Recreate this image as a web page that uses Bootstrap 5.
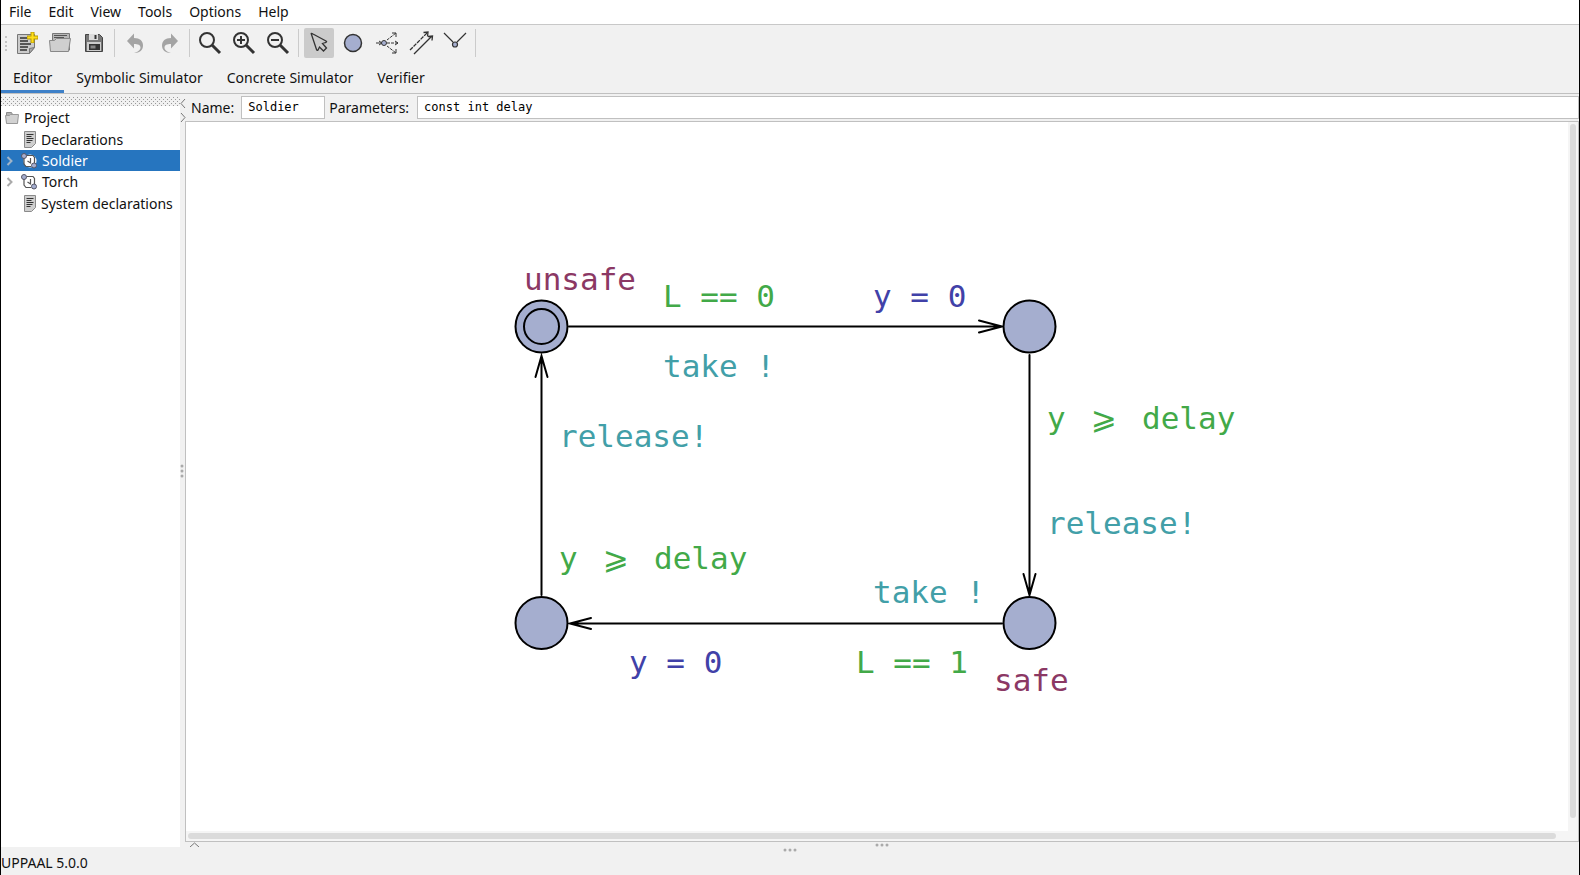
<!DOCTYPE html>
<html lang="en">
<head>
<meta charset="utf-8">
<meta name="viewport" content="width=device-width, initial-scale=1">
<title>UPPAAL</title>
<link href="https://cdn.jsdelivr.net/npm/bootstrap@5.3.0/dist/css/bootstrap.min.css" rel="stylesheet">
<style>
  body { font: 14px/20px "Noto Sans", sans-serif; color: #111; background: #f1f1f1; }
  .app-window { border: solid #000; border-width: 0 1px; }
  .menu-bar { background: #fff; border-bottom: 1px solid #c8c8c8; height: 25px; gap: 1px; }
  .menu-bar a, .mode-tabs a { color: #111; text-decoration: none; }
  .menu-bar a { padding: 2px 8px; }
  .tool-bar { height: 36px; padding: 0 4px; gap: 4px; }
  .tool-grip { width: 2px; height: 15px; border-left: 2px dotted #c4c4c4; }
  .tool-btn { width: 30px; height: 30px; padding: 0; border: 0; border-radius: 2px; background: none; display: flex; }
  .tool-btn.active { background: #cbcbcb; }
  .tool-sep { width: 1px; height: 28px; margin: 0 1px; background: #cbcbcb; }
  .mode-tabs { height: 33px; border-bottom: 1px solid #c0c0c0; }
  .mode-tabs a { padding: 7px 12px 2px; border-bottom: 3px solid transparent; }
  .mode-tabs a.active { border-color: #3d80c8; }
  .side-pane { width: 179px; padding-top: 3px; }
  .drag-strip { height: 9px; background:
    conic-gradient(from 270deg at 1px 1px, #999 25%, transparent 0) 0 0 / 4px 4px,
    conic-gradient(from 270deg at 1px 1px, #999 25%, transparent 0) 2px 2px / 4px 4px; }
  .tree-row { height: 22px; padding: 1px 0 0 4px; gap: 5px; white-space: nowrap; }
  .tree-row svg { flex: none; }
  .tree-row.short-row { height: 21px; }
  .tree-row.chosen { background: #2675bf; color: #fff; }
  .split-v { width: 5px; }
  .split-h { height: 5px; }
  .over { position: absolute; }
  .param-row { height: 27px; padding: 2px 0 3px 6px; }
  .param-row label { padding-top: 1px; }
  .param-row input { height: 23px; padding: 0 6px; border: 1px solid #c0c0c0; border-radius: 0; font: 12px/16px "DejaVu Sans Mono", monospace; color: #000; background: #fff; }
  .name-box { width: 84px; margin: 0 4px 0 7px; }
  .param-box { margin-left: 8px; }
  .draw-area { border: 1px solid #c0c0c0; background: #fff; }
  .bar-v { width: 10px; background: #f5f5f5; padding: 2px 2px 13px; }
  .bar-h { height: 10px; background: #f5f5f5; padding: 2px 22px 2px 2px; }
  .bar-v div, .bar-h div { width: 100%; height: 100%; border-radius: 3px; background: #dbdbdb; }
  .automaton text { font: 31px "DejaVu Sans Mono", monospace; white-space: pre; }
  .automaton .rel { font-family: "DejaVu Sans", sans-serif; }
  .loc { fill: #8b3864; } .guard { fill: #42a948; } .update { fill: #4141a8; } .sync { fill: #429fa8; }
  .state-line { fill: #a5aecf; stroke: #000; stroke-width: 2; }
  .edge-line { fill: none; stroke: #000; stroke-width: 2; stroke-linecap: round; }
  .status-line { height: 23px; padding-top: 1px; }
</style>
</head>
<body>
<svg width="0" height="0" class="position-absolute" aria-hidden="true">
  <defs>
    <symbol id="doc" viewBox="0 0 12 17"><path d="M.5.5h11v12l-4 4h-7z" fill="#cfcfcf" stroke="#8a8a8a"/><path d="M2.500 3.500h7M2.500 5.500h5M2.500 7.500h7M2.500 9.500h6M2.500 11.500h4" stroke="#333"/></symbol>
    <symbol id="folder" viewBox="0 0 14 14"><path d="M1.500 12V1.500h5l1 2h5V12z" fill="#b4b4b4" stroke="#8c8c8c"/><path d="M1.500 12.500l-1-8h4l1-1h8l-1 9z" fill="#d2d2d2" stroke="#999"/></symbol>
    <symbol id="template" viewBox="0 0 16 16"><circle cx="9" cy="8" r="6.500" fill="#fff"/><path d="M6 2.500h6l1.500 2V10M3 5v6l2 2.500h5M9.500 5v5L6.500 8" fill="none" stroke="#555" stroke-width="1.200"/><g fill="#a5aecf" stroke="#556"><circle cx="3" cy="3" r="2.500"/><circle cx="13" cy="12.500" r="2.500"/></g></symbol>
  </defs>
</svg>
<div class="app-window d-flex flex-column vh-100 overflow-hidden">
  <nav class="menu-bar d-flex align-items-start" aria-label="Menu">
    <a href="#">File</a><a href="#">Edit</a><a href="#">View</a><a href="#">Tools</a><a href="#">Options</a><a href="#">Help</a>
  </nav>

  <div class="tool-bar d-flex align-items-center" role="toolbar" aria-label="Tools">
    <span class="tool-grip"></span>
    <button class="tool-btn" type="button" aria-label="New"><svg width="30" height="30"><path d="M6.500 6.500h17v13l-5 6h-12z" fill="#cbcbcb" stroke="#777"/><path d="M18.500 25.500v-5l5-1z" fill="#aaa" stroke="#777"/><path d="M9 10h7M9 13h8M9 16h11M9 19h8M9 22h7" stroke="#333" stroke-width="1.500"/><path d="M21.500 4v11M16 9.500h11" stroke="#b89a00" stroke-width="4"/><path d="M21.500 4.500v10M16.500 9.500h10" stroke="#ffdf1c" stroke-width="2"/></svg></button>
    <button class="tool-btn" type="button" aria-label="Open"><svg width="30" height="30"><path d="M7.500 22V5.500h17V22z" fill="#b8b8b8" stroke="#777"/><path d="M9 7.500h13M9 9.500h10" stroke="#555"/><path d="M4.500 12.500h5l2-2h14l-2 13h-18z" fill="#cfcfcf" stroke="#888"/></svg></button>
    <button class="tool-btn" type="button" aria-label="Save"><svg width="30" height="30"><path d="M6.500 6.500h14l3 3v14h-17z" fill="#777" stroke="#444"/><path d="M10 6h9v6h-9z" fill="#ddd"/><path d="M15.500 7h2v4h-2z" fill="#333"/><path d="M8 14h14v9H8z" fill="#ccc"/><path d="M10 16h11v6H10z" fill="#333"/><path d="M11.500 17.500h5v3h-5z" fill="#888"/></svg></button>
    <span class="tool-sep"></span>
    <button class="tool-btn" type="button" aria-label="Undo"><svg width="30" height="30"><path d="M7 13L14 5.500v4.500c6 0 9 3 9 7.500s-3 7.500-9 7.500c4-1 6.500-3 6.500-5.500S18 16 14 16v4.500z" fill="#a4a4a4"/></svg></button>
    <button class="tool-btn" type="button" aria-label="Redo"><svg width="30" height="30"><path d="M24 13L17 5.500v4.500c-6 0-9 3-9 7.500s3 7.500 9 7.500c-4-1-6.500-3-6.500-5.500S13 16 17 16v4.500z" fill="#a4a4a4"/></svg></button>
    <span class="tool-sep"></span>
    <button class="tool-btn" type="button" aria-label="Zoom to fit"><svg width="30" height="30" fill="none" stroke="#333"><circle cx="12" cy="12" r="7" stroke-width="2"/><path d="M17 17l8 8" stroke-width="3"/></svg></button>
    <button class="tool-btn" type="button" aria-label="Zoom in"><svg width="30" height="30" fill="none" stroke="#333"><circle cx="12" cy="12" r="7" stroke-width="2"/><path d="M17 17l8 8" stroke-width="3"/><path d="M8 12h8M12 8v8" stroke-width="2"/></svg></button>
    <button class="tool-btn" type="button" aria-label="Zoom out"><svg width="30" height="30" fill="none" stroke="#333"><circle cx="12" cy="12" r="7" stroke-width="2"/><path d="M17 17l8 8" stroke-width="3"/><path d="M8 12h8" stroke-width="2"/></svg></button>
    <span class="tool-sep"></span>
    <button class="tool-btn active" type="button" aria-label="Select"><svg width="30" height="30"><path d="M7.500 6.500Q6.500 4.500 9 6l13 7q1.500 1-.5 1.500l-3 1 4 4.500-3 3-4-4-1.500 3q-1 1-1.500-.5z" fill="none" stroke="#333" stroke-width="1.300"/></svg></button>
    <button class="tool-btn" type="button" aria-label="Add location"><svg width="30" height="30"><circle cx="15" cy="15" r="8.500" fill="#a5aecf" stroke="#333" stroke-width="1.500"/></svg></button>
    <button class="tool-btn" type="button" aria-label="Add branch"><svg width="30" height="30" fill="none" stroke="#333"><path d="M4 15h6M7 13l3 2-3 2M20 5h4v4M20 25h4v-4M23 13l3 2-3 2"/><path d="M15 12l9-7M15 15h11M15 18l9 7" stroke-dasharray="3 1"/><circle cx="12" cy="15" r="2.500" fill="#a5aecf"/></svg></button>
    <button class="tool-btn" type="button" aria-label="Add edge"><svg width="30" height="30" fill="none" stroke="#333" stroke-width="1.300"><path d="M4 22L21 5" stroke-dasharray="4 1"/><path d="M17.500 4.500l4.500-.5-.5 4.500M8 26L26 8M22 8.500l4.500-.5-.5 4.500"/></svg></button>
    <button class="tool-btn" type="button" aria-label="Add nail"><svg width="30" height="30" fill="none" stroke="#333" stroke-width="1.200"><path d="M4 5l9 9M26 5l-9 9"/><circle cx="15" cy="16.500" r="2.500" fill="#a5aecf"/></svg></button>
    <span class="tool-sep"></span>
  </div>

  <nav class="mode-tabs d-flex" aria-label="Mode">
    <a class="active" href="#">Editor</a><a href="#">Symbolic Simulator</a><a href="#">Concrete Simulator</a><a href="#">Verifier</a>
  </nav>

  <div class="d-flex flex-grow-1 overflow-hidden">
    <aside class="side-pane d-flex flex-column flex-shrink-0">
      <div class="drag-strip"></div>
      <div class="bg-white flex-grow-1">
        <div class="tree-row d-flex align-items-center"><svg width="14" height="14"><use href="#folder"/></svg>Project</div>
        <div class="tree-row d-flex align-items-center"><svg width="14" height="10"></svg><svg width="12" height="17"><use href="#doc"/></svg>Declarations</div>
        <div class="tree-row short-row chosen d-flex align-items-center"><svg width="10" height="10"><path d="M2.500 1l4 4-4 4" fill="none" stroke="#9fb4c8" stroke-width="2"/></svg><svg width="17" height="16"><use href="#template" x="1" width="16" height="16"/></svg>Soldier</div>
        <div class="tree-row short-row d-flex align-items-center"><svg width="10" height="10"><path d="M2.500 1l4 4-4 4" fill="none" stroke="#aaa" stroke-width="2"/></svg><svg width="17" height="16"><use href="#template" x="1" width="16" height="16"/></svg>Torch</div>
        <div class="tree-row d-flex align-items-center"><svg width="14" height="10"></svg><svg width="12" height="17"><use href="#doc"/></svg>System declarations</div>
      </div>
    </aside>
    <div class="split-v position-relative d-flex align-items-center flex-shrink-0">
      <svg class="over top-0 start-0" width="6" height="30" fill="none" stroke="#777"><path d="M5 5L1 9.500l4 4.500M1 19l4 4.500L1 28"/></svg>
      <svg width="5" height="14" fill="#aaa"><circle cx="2" cy="2" r="1.500"/><circle cx="2" cy="7" r="1.500"/><circle cx="2" cy="12" r="1.500"/></svg>
    </div>
    <main class="d-flex flex-column flex-grow-1 overflow-hidden">
      <div class="param-row d-flex align-items-center">
        <label for="tname">Name:</label>
        <input id="tname" class="name-box" type="text" value="Soldier">
        <label for="tparam">Parameters:</label>
        <input id="tparam" class="param-box flex-grow-1" type="text" value="const int delay">
      </div>
      <div class="draw-area d-flex flex-column flex-grow-1 overflow-hidden">
        <div class="d-flex flex-grow-1 overflow-hidden">
          <svg class="automaton flex-grow-1 h-100" role="img" aria-label="Soldier automaton">
            <g class="edge-line">
              <path d="M383 204.500H816M793 198.500l23 6-23 6"/>
              <path d="M843.500 233V473M837.500 452l6 21 6-21"/>
              <path d="M816 501.500H384M405 496l-21 5.500 21 5.500"/>
              <path d="M355.500 473V234M349.500 255l6-21 6 21"/>
            </g>
            <g class="state-line">
              <circle cx="355.500" cy="204.500" r="26"/><circle cx="355.500" cy="204.500" r="17.500"/>
              <circle cx="843.500" cy="204.500" r="26"/>
              <circle cx="843.500" cy="501" r="26"/>
              <circle cx="355.500" cy="501" r="26"/>
            </g>
            <text class="loc" x="338" y="168">unsafe</text>
            <text class="guard" x="477" y="185">L == 0</text>
            <text class="update" x="687" y="185">y = 0</text>
            <text class="sync" x="477" y="255">take !</text>
            <text class="guard" x="861" y="307">y <tspan class="rel" x="905">⩾</tspan><tspan x="956">delay</tspan></text>
            <text class="sync" x="861" y="412">release!</text>
            <text class="sync" x="373" y="325">release!</text>
            <text class="guard" x="373" y="447">y <tspan class="rel" x="417">⩾</tspan><tspan x="468">delay</tspan></text>
            <text class="update" x="443" y="551">y = 0</text>
            <text class="sync" x="687" y="481">take !</text>
            <text class="guard" x="670" y="551">L == 1</text>
            <text class="loc" x="808" y="569">safe</text>
          </svg>
          <div class="bar-v flex-shrink-0"><div></div></div>
        </div>
        <div class="bar-h flex-shrink-0"><div></div></div>
      </div>
      <div class="split-h position-relative d-flex justify-content-center align-items-center flex-shrink-0">
        <svg class="over top-0 start-0 ms-1" width="12" height="6" fill="none" stroke="#777"><path d="M1 5l4.500-4L10 5"/></svg>
        <svg width="14" height="4" fill="#aaa"><circle cx="2" cy="2" r="1.500"/><circle cx="7" cy="2" r="1.500"/><circle cx="12" cy="2" r="1.500"/></svg>
      </div>
    </main>
  </div>
  <div class="split-h d-flex justify-content-center align-items-center flex-shrink-0">
    <svg width="14" height="4" fill="#aaa"><circle cx="2" cy="2" r="1.500"/><circle cx="7" cy="2" r="1.500"/><circle cx="12" cy="2" r="1.500"/></svg>
  </div>
  <footer class="status-line flex-shrink-0">UPPAAL 5.0.0</footer>
</div>
<script src="https://cdn.jsdelivr.net/npm/bootstrap@5.3.0/dist/js/bootstrap.bundle.min.js"></script>
</body>
</html>
